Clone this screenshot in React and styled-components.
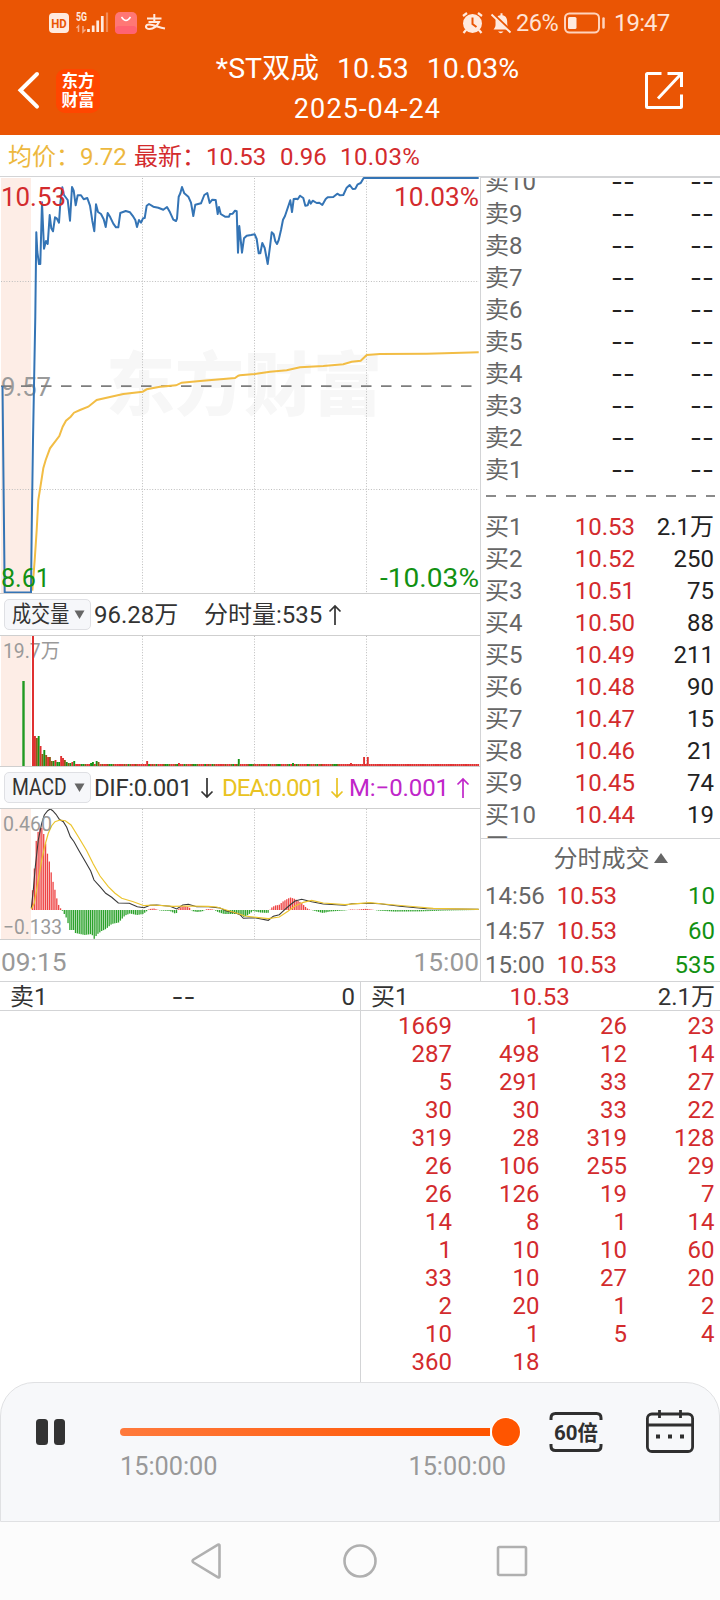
import React from "react";
import styled, { createGlobalStyle } from "styled-components";

const RED = "#d32b2d";
const GREEN = "#129112";
const LINE = "#d3d4d6";

// chart points are stored in thirds of a pixel, relative to an origin
const thirds = (ox, oy, flat) => {
  const out = [];
  for (let i = 0; i < flat.length; i += 2) {
    out.push([ox + flat[i] / 3, oy + flat[i + 1] / 3]);
  }
  return out;
};

const toPoints = (list) =>
  list.map(([x, y]) => `${x.toFixed(1)},${y.toFixed(1)}`).join(" ");

const PRICE = [
  [2.5, 386], [4.7, 592.5], [31, 592.5], [31.7, 530], [33, 440], [34, 386],
  ...thirds(0, 170, [
    106, 440, 109, 187, 112, 245, 117, 282, 121, 282, 126, 97, 132, 236, 138, 213,
    143, 222, 149, 135, 154, 175, 159, 184, 165, 142, 170, 145, 177, 158, 181, 100,
    187, 52, 192, 75, 203, 90, 210, 152, 216, 51, 221, 62, 227, 106, 233, 76, 243,
    76, 251, 88, 262, 84, 270, 107, 277, 152, 283, 184, 288, 103, 294, 126, 303,
    132, 311, 148, 317, 171, 323, 129, 331, 142, 340, 161, 348, 172, 355, 172, 361,
    129, 377, 123, 390, 127, 400, 140, 406, 150, 411, 171, 417, 150, 423, 158, 429,
    145, 434, 144, 440, 107, 447, 102, 460, 110, 475, 113, 490, 119, 501, 111, 510,
    127, 520, 149, 528, 153, 531, 146, 536, 80, 541, 70, 546, 51, 553, 70, 565, 80,
    573, 98, 580, 138, 586, 104, 603, 100, 613, 75, 622, 69, 629, 99, 637, 89, 647,
    90, 653, 132, 657, 111, 662, 132, 675, 140, 687, 140, 690, 132, 698, 131, 705,
    122, 710, 124, 714, 248, 718, 168,
  ]),
  ...thirds(240, 170, [
    6, 248, 12, 205, 20, 197, 33, 195, 44, 193, 50, 207, 56, 250, 61, 250, 67, 219,
    74, 234, 83, 282, 90, 230, 95, 187, 101, 193, 106, 214, 111, 222, 116, 210, 123,
    180, 129, 149, 135, 138, 151, 91, 156, 126, 161, 87, 168, 86, 173, 88, 180, 77,
    190, 84, 196, 107, 203, 106, 208, 91, 212, 101, 218, 92, 230, 99, 238, 98, 247,
    105, 257, 87, 263, 82, 280, 81, 292, 71, 300, 76, 310, 75, 320, 53, 329, 45,
    338, 57, 346, 56, 353, 43, 362, 39, 371, 24, 716, 24,
  ]),
];

const AVERAGE = [
  ...thirds(0, 380, [
    97, 632, 104, 540, 110, 450, 115, 360, 122, 315, 130, 265, 137, 240, 150, 205,
    178, 168, 188, 140, 198, 122, 212, 110, 222, 98, 240, 90, 265, 80, 290, 60, 370,
    42, 428, 35, 440, 28, 480, 20, 528, 16, 545, 8, 600, 3, 705, -6, 715, -13,
  ]),
  ...thirds(240, 170, [
    0, 616, 44, 612, 90, 605, 140, 601, 180, 592, 250, 588, 310, 583, 335, 575,
    362, 572, 380, 555, 420, 552, 560, 551, 716, 547,
  ]),
];

const DIF = [
  ...thirds(0, 790, [
    94, 355, 100, 300, 106, 230, 115, 150, 125, 100, 133, 75, 143, 62, 151, 57, 158,
    62, 168, 73, 178, 88, 190, 95, 200, 112, 211, 140, 222, 155, 237, 182, 257, 217,
    272, 243, 282, 270, 300, 290, 317, 310, 335, 322, 355, 339, 388, 340, 412, 350,
    432, 353, 450, 346, 470, 345, 510, 349, 530, 357, 548, 345, 565, 343, 590, 350,
    625, 350, 660, 354, 680, 363, 705, 368,
  ]),
  ...thirds(240, 620, [
    0, 884, 10, 895, 44, 893, 85, 901, 100, 889, 118, 884, 135, 868, 150, 855, 165,
    843, 185, 838, 215, 845, 250, 852, 315, 856, 335, 851, 390, 850, 420, 851, 480,
    859, 560, 866, 716, 868,
  ]),
];

const DEA = [
  ...thirds(0, 790, [
    94, 358, 103, 340, 113, 280, 125, 210, 135, 165, 145, 130, 155, 107, 165, 95,
    180, 90, 196, 92, 213, 105, 235, 140, 260, 182, 280, 222, 300, 258, 325, 290,
    345, 310, 365, 325, 400, 335, 432, 347, 460, 345, 520, 349, 560, 348, 625, 349,
    650, 351,
  ]),
  ...thirds(240, 620, [
    0, 883, 15, 888, 85, 896, 118, 891, 145, 873, 165, 858, 190, 847, 215, 841, 250,
    849, 315, 854, 390, 848, 430, 852, 500, 858, 580, 865, 716, 868,
  ]),
];

// outline of the MACD bars: x, signed height
const MACD_OUTLINE = [
  [32, 14], [34.5, 43], [36.3, 70], [38.3, 79], [40.3, 82], [42, 82], [44, 75],
  [45.7, 66], [47.7, 55], [49.7, 47], [51.3, 37], [53.3, 27], [55, 20], [56.7, 12],
  [58.7, 5], [60.3, 2], [62, 0], [64.3, -4], [66, -7], [68, -13], [69.7, -20],
  [73.7, -20], [75.3, -23], [84.7, -25], [91.7, -24], [94.3, -29], [97, -24.5],
  [101.7, -21], [106, -19], [111.7, -14], [118.7, -12.5], [125, -5.5], [130, -3.5],
  [137, -5], [143, -4], [147, -1], [149, 1], [154, 1.5], [160, -0.5], [170, -1],
  [176, -4], [179, 2], [183, 4], [189, 3], [192, -1], [197, -2], [202, -1.5],
  [207, 1], [213, 0.7], [218, -2], [224, -4], [238, -4], [244, -7], [248, -5],
  [253, -1], [260, -2.5], [268, -3], [271, 2], [275, 4.5], [279, 5], [283, 8.5],
  [288, 11.5], [290.7, 12.5], [295, 11], [301.7, 7], [305, 3.5], [308, 1],
  [315, -1], [323, -3], [330, -1.5], [345, -0.5], [351, 0.6], [356, 0.3],
  [366, 1.2], [371, 0.6], [378, -0.6], [395, -1.6], [420, -1.4], [447, -0.5],
  [478, 0],
];

const outlineAt = (x) => {
  const i = MACD_OUTLINE.findIndex(([px]) => px >= x);
  if (i <= 0) return MACD_OUTLINE[0][1];
  const [x0, h0] = MACD_OUTLINE[i - 1];
  const [x1, h1] = MACD_OUTLINE[i];
  return h0 + ((h1 - h0) * (x - x0)) / (x1 - x0);
};

const MACD_BARS = Array.from({ length: 237 }, (_, i) => {
  const x = 32.5 + i * 1.87;
  return { x, h: outlineAt(x) };
});

const OPENING_VOLUME = [
  [30, "r"], [28, "b"], [30, "g"], [20, "r"], [12, "b"], [16, "g"], [11, "b"],
  [9, "r"], [9, "b"], [5, "b"], [5, "g"], [6, "r"], [4, "g"], [4, "g"], [10, "r"],
  [8, "r"], [6, "b"], [4, "g"], [3, "b"], [3, "g"], [4, "r"], [5, "g"],
];
const SPIKES = {
  30: [3, "g"], 31: [4, "g"], 33: [5, "g"], 34: [4, "b"], 60: [5, "r"],
  77: [3, "r"], 109: [7, "g"], 138: [3, "g"], 169: [3, "r"], 176: [9, "r"],
  178: [9, "r"],
};
const TONE = { r: "#e03131", g: "#179417", b: "#8f5a16" };

const VOLUME_BARS = Array.from({ length: 238 }, (_, i) => {
  const quiet = i > 165 || i % 11 < 3 ? "r" : i % 3 === 0 ? "b" : i % 5 < 2 ? "g" : "r";
  const [h, tone] = OPENING_VOLUME[i] || SPIKES[i] || [2, quiet];
  return { x: 34 + i * 1.87, h, tone };
});

const SELLS = [10, 9, 8, 7, 6, 5, 4, 3, 2, 1];
const BUYS = [
  ["10.53", "2.1万"],
  ["10.52", "250"],
  ["10.51", "75"],
  ["10.50", "88"],
  ["10.49", "211"],
  ["10.48", "90"],
  ["10.47", "15"],
  ["10.46", "21"],
  ["10.45", "74"],
  ["10.44", "19"],
  ["10.43", "244"],
];
const TRADES = [
  ["14:56", "10.53", "10"],
  ["14:57", "10.53", "60"],
  ["15:00", "10.53", "535"],
];
const QUEUE = [
  1669, 1, 26, 23, 287, 498, 12, 14, 5, 291, 33, 27, 30, 30, 33, 22, 319, 28, 319,
  128, 26, 106, 255, 29, 26, 126, 19, 7, 14, 8, 1, 14, 1, 10, 10, 60, 33, 10, 27,
  20, 2, 20, 1, 2, 10, 1, 5, 4, 360, 18,
];

const StatusBar = () => (
  <Status>
    <svg width="170" height="46" viewBox="0 0 170 46">
      <rect x="49" y="13" width="20" height="20" rx="4" fill="#ffeadf" />
      <text x="51.3" y="28" fontSize="13" fontWeight="700" fill="#ea5504" textLength="15.5" lengthAdjust="spacingAndGlyphs">HD</text>
      <text x="76" y="21" fontSize="12" fontWeight="700" fill="#ffeadf" textLength="11" lengthAdjust="spacingAndGlyphs">5G</text>
      <path d="M76.5 28l2-2v6M83 26v6l2.5-2.5" stroke="#f5a987" strokeWidth="1.5" fill="none" />
      <path d="M88.500 29v3M93.200 25.500v6.500M97.700 20.500v11.500M102.300 16v16" stroke="#ffeadf" strokeWidth="2.700" />
      <path d="M107 12.500v19.500" stroke="#f08a56" strokeWidth="2.200" />
      <rect x="115" y="12" width="22" height="22" rx="5" fill="#ff7775" />
      <rect x="115" y="26" width="22" height="8" rx="4" fill="#ff6372" />
      <path d="M121.500 17q4.500 7 9 0" stroke="#fff" strokeWidth="1.400" fill="none" />
      <path d="M147 18.500h14.500M154.300 14v8M148.500 22h10.500c-2 4-5.500 7-9.500 7-5 0-4.500-4.500 0-4.500 4 0 9 3 15.500 4" stroke="#ffeadf" strokeWidth="2" fill="none" />
    </svg>
    <StatusRight>
      <svg width="54" height="30" viewBox="460 8 54 30" fill="none">
        <circle cx="472.500" cy="23.500" r="9.500" fill="#ffeadf" />
        <path d="M463 16l4-3M482 16l-4-3M466 30l-2.500 3M479 30l2.500 3" stroke="#ffeadf" strokeWidth="2.200" />
        <path d="M472.500 17.500v6.500l4 3" stroke="#ea5504" strokeWidth="2" />
        <path d="M493.500 29.500c2.500-2.500 2-5 2-8 0-3.500 2-6 5-6.300v-2h2v2c3 .4 4.700 3 4.700 6.300 0 3 0 5.500 2.300 8z" fill="#ffeadf" />
        <path d="M498 31.500h5.500q-2.700 3.500-5.500 0z" fill="#ffeadf" />
        <path d="M492.500 13.500l19 18" stroke="#ea5504" strokeWidth="2.500" />
        <path d="M491.500 14.500l19 18" stroke="#ffeadf" strokeWidth="1.900" />
      </svg>
      <Battery>26%</Battery>
      <svg width="44" height="24" viewBox="0 0 44 24" fill="none">
        <rect x="2" y="2.500" width="34" height="19" rx="4.500" stroke="#ffd3bd" strokeWidth="2" />
        <rect x="5" y="6" width="8.500" height="12" rx="1.500" fill="#ffeadf" />
        <path d="M40.500 7.500v9" stroke="#ffd3bd" strokeWidth="2.500" strokeLinecap="round" />
      </svg>
      <Clock>19:47</Clock>
    </StatusRight>
  </Status>
);

const Header = () => (
  <Top>
    <StatusBar />
    <TitleBar>
      <HeaderLeft>
        <svg width="24" height="40" viewBox="0 0 24 40" fill="none">
          <path d="M21 3L4.500 19.300l16.500 16.300" stroke="#fff" strokeWidth="4" strokeLinecap="round" />
        </svg>
        <Brand>
          <span>东方</span>
          <span>财富</span>
        </Brand>
      </HeaderLeft>
      <Titles>
        <StockName>
          *ST双成<Quote>10.53</Quote>
          <Quote>10.03%</Quote>
        </StockName>
        <TradeDate>2025-04-24</TradeDate>
      </Titles>
      <svg width="42" height="42" viewBox="0 0 42 42" fill="none" stroke="#fff" strokeWidth="3">
        <path d="M18.500 3.500H4.500Q3.500 3.500 3.500 4.500v32q0 1 1 1h33q1 0 1-1v-12M24.500 3.500h14v13.500M15 28.500L38 4" />
      </svg>
    </TitleBar>
  </Top>
);

const Grid = ({ top, bottom }) => (
  <g stroke="#bdbdbd" strokeDasharray="1 1.700">
    {[142.5, 254.5, 366.5].map((x) => (
      <line key={x} x1={x} x2={x} y1={top} y2={bottom} />
    ))}
  </g>
);

const PriceChart = () => (
  <Chart height="417" viewBox="0 177 480 416">
    <rect x="1" y="178" width="30" height="415" fill="#fdede6" />
    <text x="106" y="410" fontSize="69" fontWeight="900" fill="#f7f7f7" textLength="276">东方财富</text>
    <Grid top={178} bottom={593} />
    <path d="M1 281.500h478M1 489.500h478" stroke="#bdbdbd" strokeDasharray="1 1.700" />
    <Label x="1" y="395.500" size={25} fill="#9a9a9a" textLength="50">9.57</Label>
    <path d="M1 386.200h478" stroke="#7d7d7d" strokeWidth="1.800" strokeDasharray="10.500 9.500" />
    <polyline points={toPoints(AVERAGE)} fill="none" stroke="#f2bd45" strokeWidth="2" />
    <polyline points={toPoints(PRICE)} fill="none" stroke="#3474b5" strokeWidth="2" strokeLinejoin="round" />
    <Label x="1" y="206" size={26} fill={RED} textLength="65">10.53</Label>
    <Label x="394" y="206" size={26} fill={RED} textLength="85">10.03%</Label>
    <Label x="1" y="586.500" size={26} fill={GREEN} textLength="49">8.61</Label>
    <Label x="380" y="586.500" size={26} fill={GREEN} textLength="99">-10.03%</Label>
  </Chart>
);

const VolumeChart = () => (
  <Chart height="131" viewBox="0 636 480 130">
    <rect x="1" y="636" width="30" height="130" fill="#fdede6" />
    <Grid top={636} bottom={766} />
    <Label x="3" y="658" size={20.500} fill="#9a9a9a" textLength="57">19.7万</Label>
    <rect x="22.300" y="681" width="2.400" height="85" fill="#219a21" />
    <rect x="32" y="636" width="2" height="130" fill="#e03131" />
    {VOLUME_BARS.map(({ x, h, tone }) => (
      <rect key={x} x={x} y={766 - h} width="1.900" height={h} fill={TONE[tone]} />
    ))}
  </Chart>
);

const MacdChart = () => (
  <Chart height="131" viewBox="0 809 480 130">
    <rect x="1" y="809" width="30" height="130" fill="#fdede6" />
    <Grid top={809} bottom={939} />
    {MACD_BARS.map(({ x, h }) => (
      <rect
        key={x}
        x={x - 0.65}
        y={h > 0 ? 910 - h : 910}
        width="1.300"
        height={Math.abs(h)}
        fill={h > 0 ? "#ee4444" : "#2ba22b"}
      />
    ))}
    <polyline points={toPoints(DIF)} fill="none" stroke="#3a3a3a" strokeWidth="1.100" />
    <polyline points={toPoints(DEA)} fill="none" stroke="#ecc52f" strokeWidth="1.200" />
    <Label x="3" y="830.500" size={20.500} fill="#9a9a9a" textLength="49">0.460</Label>
    <Label x="3" y="933.500" size={20.500} fill="#9a9a9a" textLength="59">−0.133</Label>
  </Chart>
);

const Arrow = ({ down }) => (
  <svg width="14" height="24" viewBox="0 0 14 24" fill="none" stroke="currentColor" strokeWidth="1.700">
    <path d={down ? "M7 2v19M1.500 15.500L7 21l5.500-5.500" : "M7 22V3M1.500 8.500L7 3l5.500 5.500"} />
  </svg>
);

const Picker = ({ label, squeeze }) => (
  <PickerButton>
    <PickerLabel $squeeze={squeeze}>{label}</PickerLabel>
    <svg width="11" height="9" viewBox="0 0 11 9">
      <path d="M.5.500h10L5.500 9z" fill="#666" />
    </svg>
  </PickerButton>
);

const LevelRow = ({ name, price, volume }) => (
  <Level>
    <Muted>{name}</Muted>
    {price ? <Cell $color={RED}>{price}</Cell> : <Blank>--</Blank>}
    {volume ? <Cell $color="#222">{volume}</Cell> : <Blank>--</Blank>}
  </Level>
);

const OrderBook = () => (
  <Side>
    <Levels>
      <LevelsScroll>
        {SELLS.map((n) => (
          <LevelRow key={n} name={`卖${n}`} />
        ))}
        <MidLine />
        {BUYS.map(([price, volume], i) => (
          <LevelRow key={price} name={`买${i + 1}`} price={price} volume={volume} />
        ))}
      </LevelsScroll>
    </Levels>
    <Trades>
      <TradesTitle>
        分时成交
        <svg width="14" height="10" viewBox="0 0 14 10">
          <path d="M7 0l7 10H0z" fill="#666" />
        </svg>
      </TradesTitle>
      {TRADES.map(([time, price, volume]) => (
        <Trade key={time}>
          <Muted>{time}</Muted>
          <Cell $color={RED}>{price}</Cell>
          <Cell $color={GREEN}>{volume}</Cell>
        </Trade>
      ))}
    </Trades>
  </Side>
);

const Player = () => (
  <PlayerPanel>
    <Pause>
      <i />
      <i />
    </Pause>
    <Progress>
      <Track>
        <Bar />
        <Thumb />
      </Track>
      <Times>
        <span>15:00:00</span>
        <span>15:00:00</span>
      </Times>
    </Progress>
    <Speed>
      <svg width="54" height="42" viewBox="0 0 54 42" fill="none" stroke="#2f2f2f" strokeWidth="3">
        <path d="M2 9V7q0-4.500 4.500-4.500h41Q52 2.500 52 7v2M2 33v2q0 4.500 4.500 4.500h41Q52 39.500 52 35v-2" />
        <text x="5" y="29" fontSize="21" fontWeight="700" fill="#2f2f2f" stroke="none" textLength="44" lengthAdjust="spacingAndGlyphs">60倍</text>
      </svg>
    </Speed>
    <svg width="50" height="44" viewBox="0 0 50 44" fill="none" stroke="#2f2f2f" strokeWidth="2.800">
      <rect x="2.400" y="4" width="45.200" height="37.500" rx="4.500" />
      <path d="M2.400 15h45.200M14.500 0v8M35.500 0v8" />
      <path d="M11 26.500h4M23 26.500h4M35 26.500h4" strokeWidth="3.800" />
    </svg>
  </PlayerPanel>
);

const SystemNav = () => (
  <Nav>
    <svg width="36" height="36" viewBox="0 0 36 36">
      <path d="M29.500 2.500v31q0 1.500-1.500.8L3.500 19.500q-2-1.500 0-3L28 1.700q1.500-.7 1.500.8z" />
    </svg>
    <svg width="36" height="36" viewBox="0 0 36 36">
      <circle cx="18" cy="18" r="15.500" />
    </svg>
    <svg width="36" height="36" viewBox="0 0 36 36">
      <rect x="4" y="4" width="28" height="28" rx="1.500" />
    </svg>
  </Nav>
);

export default function App() {
  return (
    <Page>
      <GlobalStyle />
      <Header />
      <Summary>
        <Gold>均价：</Gold>
        <Gold>9.72</Gold>
        <span>最新：</span>
        <span>10.53</span>
        <span>0.96</span>
        <Change>10.03%</Change>
      </Summary>
      <Main>
        <Charts>
          <PriceChart />
          <Toolbar>
            <Picker label="成交量" squeeze={0.83} />
            <Readout $width={110}>96.28万</Readout>
            <Readout $gap={6}>
              <span>分时量:535</span>
              <Arrow />
            </Readout>
          </Toolbar>
          <VolumeChart />
          <Toolbar>
            <Picker label="MACD" squeeze={0.84} />
            <Readout $width={128} $gap={8} $spacing={-0.4}>
              <span>DIF:0.001</span>
              <Arrow down />
            </Readout>
            <Readout $width={127} $gap={7} $color="#e9c322" $spacing={-1.1}>
              <span>DEA:0.001</span>
              <Arrow down />
            </Readout>
            <Readout $gap={7} $color="#c026c9" $spacing={-0.1}>
              <span>M:−0.001</span>
              <Arrow />
            </Readout>
          </Toolbar>
          <MacdChart />
          <TimeAxis>
            <span>09:15</span>
            <span>15:00</span>
          </TimeAxis>
        </Charts>
        <OrderBook />
      </Main>
      <Depth>
        <DepthHalf>
          <DepthHead>
            <span>卖1</span>
            <AskPrice>--</AskPrice>
            <span>0</span>
          </DepthHead>
        </DepthHalf>
        <DepthHalf>
          <DepthHead>
            <span>买1</span>
            <BidPrice>10.53</BidPrice>
            <span>2.1万</span>
          </DepthHead>
          <Queue>
            {QUEUE.map((n, i) => (
              <span key={i}>{n}</span>
            ))}
          </Queue>
        </DepthHalf>
      </Depth>
      <Player />
      <SystemNav />
    </Page>
  );
}

const GlobalStyle = createGlobalStyle`
  * {
    box-sizing: border-box;
  }
  body {
    margin: 0;
    background: #fff;
  }
  svg {
    display: block;
    flex: none;
  }
`;

const Page = styled.div`
  width: 720px;
  height: 1600px;
  display: flex;
  flex-direction: column;
  overflow: hidden;
  background: #fff;
  color: #333;
  font-family: Roboto, "Noto Sans CJK SC", sans-serif;
  font-size: 24px;
  line-height: 28px;
  white-space: nowrap;
`;

const Top = styled.header`
  height: 135px;
  background: #ea5504;
  color: #fff;
`;
const Status = styled.div`
  height: 46px;
  display: flex;
  justify-content: space-between;
`;
const StatusRight = styled.div`
  display: flex;
  align-items: center;
  width: 260px;
  color: #ffe3d5;
`;
const Battery = styled.span`
  width: 49px;
  padding-left: 2px;
  font-size: 23.5px;
  letter-spacing: -0.5px;
`;
const Clock = styled.span`
  margin-left: 7px;
  font-size: 24px;
  letter-spacing: -0.9px;
`;
const TitleBar = styled.div`
  height: 89px;
  display: flex;
  padding: 0 35px 0 16px;

  > svg {
    margin-top: 24px;
  }
`;
const HeaderLeft = styled.div`
  display: flex;
  align-items: center;
  gap: 16px;
`;
const Brand = styled.div`
  width: 44px;
  height: 44px;
  border-radius: 9px;
  background: #ff4600;
  display: flex;
  flex-direction: column;
  align-items: center;
  justify-content: center;
  padding-top: 1px;
  font-size: 16.5px;
  font-weight: 700;
  line-height: 19px;
`;
const Titles = styled.div`
  flex: 1;
  display: flex;
  flex-direction: column;
  align-items: center;
  padding-top: 4px;
  margin-right: 8px;
`;
const StockName = styled.div`
  font-size: 28.5px;
  line-height: 38px;
`;
const Quote = styled.span`
  margin-left: 18px;
`;
const TradeDate = styled.div`
  padding-top: 1px;
  font-size: 27px;
  line-height: 40px;
  letter-spacing: 1.1px;
`;

const Summary = styled.div`
  height: 41px;
  display: grid;
  grid-template-columns: 72px 54px 72px 74px 60px auto;
  align-items: center;
  padding: 3px 8px 0;
  color: ${RED};
`;
const Gold = styled.span`
  color: #edb83e;
`;
const Change = styled.span`
  letter-spacing: 0.4px;
`;

const Main = styled.main`
  height: 805px;
  display: flex;
  border-top: 1px solid ${LINE};
`;
const Charts = styled.section`
  width: 480px;
`;
const Chart = styled.svg.attrs({ width: 480 })`
  border-bottom: 1px solid #cfcfcf;
`;
const Label = styled.text.attrs({ lengthAdjust: "spacingAndGlyphs" })`
  font-size: ${({ size }) => size}px;
`;
const Toolbar = styled.div`
  height: 42px;
  display: flex;
  align-items: center;
  padding-left: 4px;
  border-bottom: 1px solid #cfcfcf;
`;
const PickerButton = styled.button`
  width: 87px;
  height: 31px;
  margin-right: 3px;
  padding: 0 5px 0 7px;
  display: flex;
  align-items: center;
  justify-content: space-between;
  background: #f6f7fa;
  border: 1px solid #dfe0e4;
  border-radius: 5px;
  font: inherit;
  color: #333;
`;
const PickerLabel = styled.span`
  width: 58px;
  text-align: left;
  font-size: 23px;
  transform: scaleX(${({ $squeeze }) => $squeeze});
  transform-origin: left center;
`;
const Readout = styled.div`
  width: ${({ $width }) => ($width ? `${$width}px` : "auto")};
  display: flex;
  align-items: center;
  gap: ${({ $gap }) => $gap || 0}px;
  color: ${({ $color }) => $color || "#333"};
  letter-spacing: ${({ $spacing }) => $spacing || 0}px;
`;
const TimeAxis = styled.div`
  height: 42px;
  display: flex;
  align-items: center;
  justify-content: space-between;
  padding: 1px 1px 0;
  font-size: 26.3px;
  color: #999;
`;

const Side = styled.section`
  width: 240px;
  border-left: 1px solid ${LINE};
`;
const Levels = styled.div`
  height: 662px;
  overflow: hidden;
  border-top: 1px solid ${LINE};
  border-bottom: 1px solid ${LINE};
`;
const LevelsScroll = styled.div`
  margin-top: -12px;
`;
const Level = styled.div`
  height: 32px;
  display: grid;
  grid-template-columns: 70px 80px 79px;
  align-items: center;
  padding-left: 4px;
`;
const Muted = styled.span`
  color: #666;
`;
const Cell = styled.span`
  text-align: right;
  color: ${({ $color }) => $color};
`;
// Inter has the wide hyphen used for empty levels
const Blank = styled.span`
  font-family: Inter, sans-serif;
  font-size: 26px;
  text-align: right;
  color: #222;
`;
const MidLine = styled.div`
  height: 25px;
  margin: 0 5px;
  background: repeating-linear-gradient(90deg, #8a8a8a 0 10px, transparent 10px 20px)
    0 9px / 100% 2px no-repeat;
`;
const Trades = styled.div`
  height: 142px;
`;
const TradesTitle = styled.div`
  height: 40px;
  display: flex;
  align-items: center;
  justify-content: center;
  gap: 4px;
  padding-left: 20px;
  color: #666;

  svg {
    margin-bottom: 3px;
  }
`;
const Trade = styled.div`
  height: 34.5px;
  display: grid;
  grid-template-columns: 70px 62px 98px;
  align-items: center;
  padding-left: 4px;
`;

const Depth = styled.section`
  height: 401px;
  display: flex;
  border-top: 1px solid ${LINE};
`;
const DepthHalf = styled.div`
  width: 360px;

  & + & {
    border-left: 1px solid ${LINE};
  }
`;
const DepthHead = styled.div`
  height: 29px;
  display: flex;
  align-items: center;
  justify-content: space-between;
  padding: 2px 5px 0 10px;
  border-bottom: 1px solid ${LINE};
`;
const AskPrice = styled.span`
  padding-right: 22px;
  font-family: Inter, sans-serif;
  font-size: 26px;
`;
const BidPrice = styled.span`
  color: ${RED};
  padding-left: 13px;
`;
const Queue = styled.div`
  display: grid;
  grid-template-columns: 91px repeat(3, 87.5px);
  grid-auto-rows: 28px;
  padding-top: 1px;
  text-align: right;
  color: ${RED};
`;

const PlayerPanel = styled.section`
  height: 140px;
  display: flex;
  align-items: flex-start;
  padding: 0 24px 0 35px;
  background: #f7f8fa;
  border: 1px solid #e0e1e3;
  border-radius: 34px 34px 0 0;

  > svg {
    margin-top: 27px;
  }
`;
const Pause = styled.div`
  display: flex;
  gap: 6px;
  margin-top: 36px;
  width: 84px;

  i {
    width: 11.5px;
    height: 26px;
    border-radius: 3.5px;
    background: #333;
  }
`;
const Progress = styled.div`
  width: 400px;
  margin-top: 35px;
`;
const Track = styled.div`
  height: 28px;
  display: flex;
  align-items: center;
  gap: 2px;
`;
const Bar = styled.div`
  width: 370px;
  height: 8px;
  border-radius: 4px 0 0 4px;
  background: linear-gradient(90deg, #ff7a3c, #ff5500);
`;
const Thumb = styled.div`
  width: 28px;
  height: 28px;
  border-radius: 50%;
  background: #ff5500;
  box-shadow: 0 0 0 1px #fff;
`;
const Times = styled.div`
  display: flex;
  justify-content: space-between;
  width: 386px;
  padding-top: 7px;
  font-size: 25.3px;
  color: #999;
`;
const Speed = styled.div`
  margin: 28px auto 0 29px;
`;
const Nav = styled.nav`
  flex: 1;
  display: flex;
  align-items: center;
  justify-content: center;
  gap: 116px;
  background: #fcfcfc;

  svg {
    fill: none;
    stroke: #b0b0b0;
    stroke-width: 2.6;
  }
`;
